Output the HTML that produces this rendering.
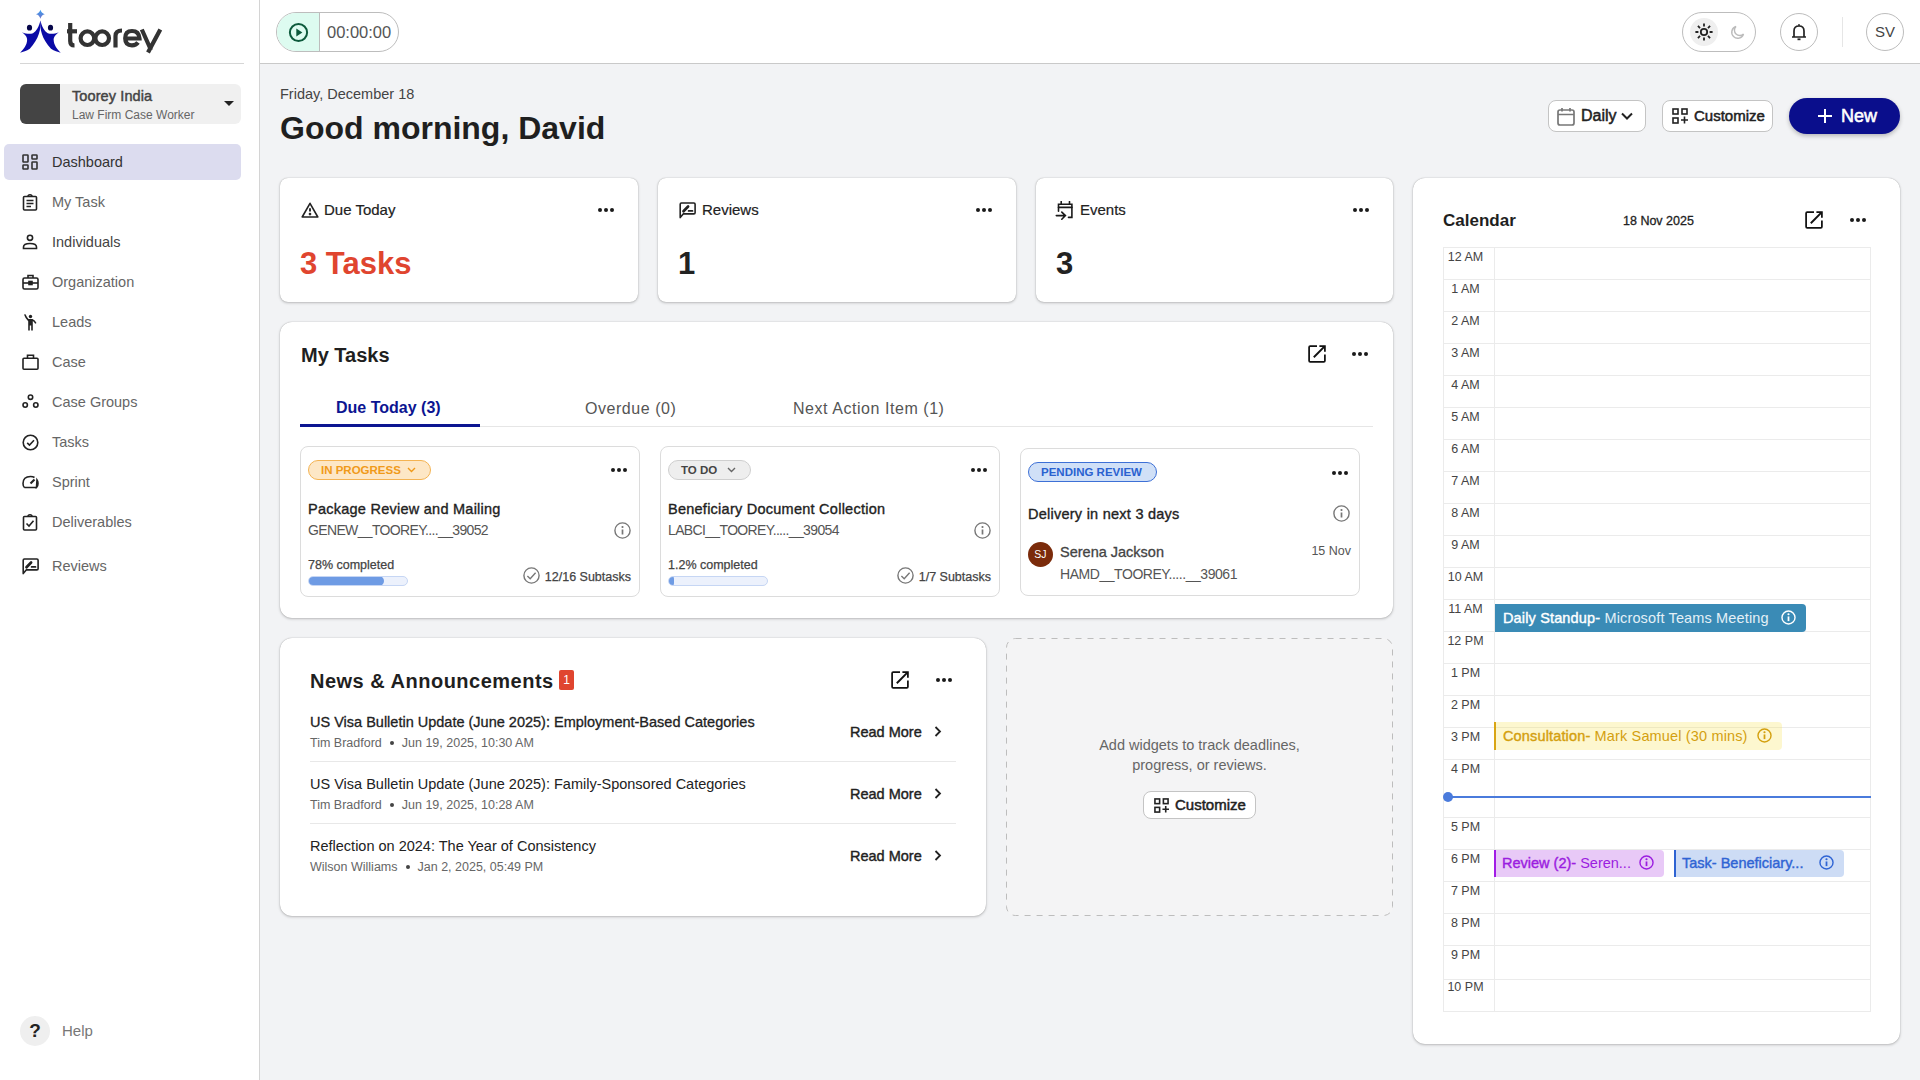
<!DOCTYPE html>
<html><head><meta charset="utf-8">
<style>
*{box-sizing:border-box;margin:0;padding:0}
html,body{width:1920px;height:1080px;overflow:hidden}
body{background:#f2f3f5;font-family:"Liberation Sans",sans-serif;color:#222;position:relative}
.abs{position:absolute}
svg{display:block}
/* sidebar */
#sb{position:absolute;left:0;top:0;width:260px;height:1080px;background:#fff;border-right:1px solid #d4d4d4}
#sb .div{position:absolute;left:20px;top:63px;width:224px;height:1px;background:#d6d6d6}
.org{position:absolute;left:20px;top:84px;width:221px;height:40px;background:#f0f0f0;border-radius:6px;overflow:hidden}
.org .sq{position:absolute;left:0;top:0;width:40px;height:40px;background:#444}
.org .t1{position:absolute;left:52px;top:4px;font-size:14.5px;color:#444;-webkit-text-stroke:0.45px #444;letter-spacing:0.1px}
.org .t2{position:absolute;left:52px;top:24px;font-size:12px;color:#666}
.org .car{position:absolute;left:204px;top:17px;width:0;height:0;border-left:5px solid transparent;border-right:5px solid transparent;border-top:5px solid #222}
.nav{position:absolute;left:4px;width:237px;height:36px;border-radius:5px}
.nav.act{background:#dcdcef}
.nav svg{position:absolute;left:18px;top:10px}
.nav span{position:absolute;left:48px;top:10px;font-size:14.5px;color:#666;line-height:16px}
.nav.act span{color:#333}
/* header */
#hd{position:absolute;left:260px;top:0;width:1660px;height:64px;background:#fff;border-bottom:1px solid #c9c9c9}

.pill{position:absolute;border:1px solid #bdbdbd;border-radius:20px;background:#fff}
.sb{-webkit-text-stroke:0.5px currentColor}
.btn{position:absolute;top:100px;height:32px;border:1px solid #c4c4c4;border-radius:8px;background:#fff}
.btn svg{position:absolute}
.btn span{position:absolute;top:6px;font-size:16px;color:#222;line-height:18px;-webkit-text-stroke:0.5px #222}
.card{position:absolute;background:#fff;border-radius:8px;box-shadow:0 1px 3px rgba(0,0,0,0.22),0 0 1px rgba(0,0,0,0.32)}
.dots{position:absolute;width:17px;height:4px}
.dots i{position:absolute;top:0;width:4.2px;height:4.2px;border-radius:50%;background:#1a1a1a}
.dots i:nth-child(1){left:0}.dots i:nth-child(2){left:6px}.dots i:nth-child(3){left:12px}

.stat .lbl{position:absolute;left:44px;top:23px;font-size:15px;color:#222;line-height:18px;-webkit-text-stroke:0.2px #222}
.stat .val{position:absolute;left:20px;top:68px;font-size:31px;font-weight:bold;line-height:36px;color:#222}
.stat svg{position:absolute;left:21px;top:24px}
.stat .dots{top:30px;right:23px}
.ibtn svg{position:absolute}

.big{border-radius:12px}
.h2{position:absolute;font-size:20px;font-weight:bold;color:#1f1f1f;line-height:24px}
.openic{position:absolute}
.tab{position:absolute;top:398px;font-size:16px;line-height:19px;color:#555;letter-spacing:0.55px}
.tc{position:absolute;background:#fff;border:1px solid #dcdcdc;border-radius:8px}
.badge{position:absolute;left:7px;top:13px;height:20px;border-radius:10px;font-size:11.5px;line-height:18px;font-weight:bold;padding-left:12px;letter-spacing:0px}
.badge svg{position:absolute;top:6px}
.tc .dots{top:21px;right:11px}
.tc .ttl{position:absolute;left:7px;top:53px;font-size:14.5px;line-height:18px;color:#222;-webkit-text-stroke:0.35px #222;letter-spacing:0.25px}
.tc .tid{position:absolute;left:7px;top:74px;font-size:14px;line-height:18px;color:#555;letter-spacing:-0.65px}
.info{position:absolute}
.tc .pct{position:absolute;left:7px;top:111px;font-size:12.5px;line-height:15px;color:#444;-webkit-text-stroke:0.25px #444}
.tc .bar{position:absolute;left:7px;top:129px;width:100px;height:10px;border-radius:5px;background:#ecf1fc;border:1px solid #c6d6f4;overflow:hidden}
.tc .bar i{position:absolute;left:-1px;top:-1px;height:10px;border-radius:5px;background:#6e9be4}
.tc .sub{position:absolute;right:8px;top:122px;font-size:12.5px;line-height:16px;color:#444;-webkit-text-stroke:0.25px #444}
.tc .sub svg{position:absolute;left:-21.5px;top:-2px}

.news .nt{position:absolute;left:30px;font-size:14.5px;line-height:18px;color:#222}
.news .nm{position:absolute;left:30px;font-size:12.5px;line-height:15px;color:#666}
.news .nm b{display:inline-block;width:4px;height:4px;border-radius:50%;background:#444;margin:0 8px 2px 8px;vertical-align:middle}
.news .rm{position:absolute;left:570px;font-size:14.5px;line-height:18px;color:#222;-webkit-text-stroke:0.4px #222}
.news .rm svg{position:absolute;left:84px;top:3px}
.news .dv{position:absolute;left:30px;width:646px;height:1px;background:#e8e8e8}
.cal .tl{position:absolute;left:0;width:51px;text-align:center;font-size:12.5px;line-height:15px;color:#444;padding-right:7px}
.ev{position:absolute;height:28px;font-size:14.5px;line-height:18px;padding:5px 0 0 8px;white-space:nowrap;border-radius:0 4px 4px 0;letter-spacing:0.15px}
.ev b{-webkit-text-stroke:0.4px currentColor;font-weight:normal}
.ev svg{position:absolute;top:6px}
</style></head>
<body>
<div id="sb">
  <svg class="abs" style="left:15px;top:5px" width="150" height="55" viewBox="0 0 150 55">
    <defs><linearGradient id="stg" x1="0" y1="0" x2="0" y2="1"><stop offset="0" stop-color="#3aa0f0"/><stop offset="1" stop-color="#7070c8"/></linearGradient></defs>
    <path d="M25.4 4.8 Q26.3 8.3 29.8 9.2 Q26.3 10.1 25.4 13.8 Q24.5 10.1 21 9.2 Q24.5 8.3 25.4 4.8Z" fill="url(#stg)"/>
    <path d="M25.4 15.6 C26.2 24 24 34 14.8 43.8 C11.5 46 8 47 5.1 47.7 C9 44 12 39.5 12.1 35.2 C12.2 33 11.7 31 7 27.3 C11 29 15 29.3 18 28.3 C21.5 26.5 24.2 21 25.4 15.6 Z" fill="#0a0aa6"/>
    <path d="M 25.4 15.6 C 24.6 24.0 26.8 34.0 36.0 43.8 C 39.3 46.0 42.8 47.0 45.7 47.7 C 41.8 44.0 38.8 39.5 38.7 35.2 C 38.6 33.0 39.1 31.0 43.8 27.3 C 39.8 29.0 35.8 29.3 32.8 28.3 C 29.3 26.5 26.6 21.0 25.4 15.6 Z" fill="#0a0aa6"/>
    <ellipse cx="14.5" cy="22.7" rx="2.6" ry="2.9" fill="#06064a"/>
    <ellipse cx="35.5" cy="22.7" rx="2.6" ry="2.9" fill="#06064a"/>
    <g fill="none" stroke="#333" stroke-width="4.2">
      <path d="M55.2 18 V36 Q55.2 40.5 59.5 40.5"/>
      <path d="M52 26.3 H62"/>
      <circle cx="72.4" cy="33.2" r="6.8"/>
      <circle cx="87.2" cy="33.2" r="6.8"/>
      <path d="M100.5 42.5 V31 Q100.5 25.5 107 25.5"/>
      <path d="M108.5 33.5 H124.5 Q124 26 117 26 Q110.2 26 110.2 33.2 Q110.2 40.3 117 40.3 Q121 40.3 123 37.5"/>
      <path d="M126.8 24.5 L136 45 M145.3 24.5 L133 47.5"/>
    </g>
  </svg>
  <div class="div"></div>
  <div class="org"><div class="sq"></div><div class="t1">Toorey India</div><div class="t2">Law Firm Case Worker</div><div class="car"></div></div>

  <div class="nav act" style="top:144px">
    <svg width="16" height="16" viewBox="0 0 16 16" fill="none" stroke="#333" stroke-width="1.6"><rect x="1" y="1" width="5" height="7" rx="0.6"/><rect x="10" y="1" width="5" height="4" rx="0.6"/><rect x="1" y="11" width="5" height="4" rx="0.6"/><rect x="10" y="8" width="5" height="7" rx="0.6"/></svg>
    <span>Dashboard</span></div>
  <div class="nav" style="top:184px">
    <svg width="16" height="17" viewBox="0 0 16 17" fill="none" stroke="#222" stroke-width="1.6"><rect x="1.5" y="2.5" width="13" height="13.5" rx="1"/><path d="M6 2.5 Q6 0.8 8 0.8 Q10 0.8 10 2.5" /><path d="M4.5 6.5H11.5M4.5 9.5H11.5M4.5 12.5H9" stroke-width="1.4"/></svg>
    <span>My Task</span></div>
  <div class="nav" style="top:224px">
    <svg width="16" height="16" viewBox="0 0 16 16" fill="none" stroke="#222" stroke-width="1.6"><circle cx="8" cy="3.8" r="2.6"/><path d="M1.5 14.5 V13 Q1.5 9.5 8 9.5 Q14.5 9.5 14.5 13 V14.5Z"/></svg>
    <span style="color:#444">Individuals</span></div>
  <div class="nav" style="top:264px">
    <svg width="17" height="16" viewBox="0 0 17 16" fill="none" stroke="#222" stroke-width="1.6"><rect x="1" y="4" width="15" height="11" rx="1.5"/><path d="M6 4V1.5H11V4"/><path d="M1 9H16"/><rect x="7" y="7.5" width="3" height="3" fill="#222"/></svg>
    <span>Organization</span></div>
  <div class="nav" style="top:304px">
    <svg width="16" height="17" viewBox="0 0 16 17" fill="#222"><circle cx="8.5" cy="2.5" r="1.7"/><path d="M2 0.5 L3.5 0.2 Q5 3.5 6.5 5 H10.5 Q13 6 14.5 9 L13.2 9.8 Q12 7.8 10.8 7 V16.5 H9.2 V11.5 H7.8 V16.5 H6.2 V7.2 Q3.5 5 2 0.5Z"/></svg>
    <span>Leads</span></div>
  <div class="nav" style="top:344px">
    <svg width="17" height="16" viewBox="0 0 17 16" fill="none" stroke="#222" stroke-width="1.6"><rect x="1" y="4.2" width="15" height="11" rx="1"/><path d="M5.5 4.2V1.2H11.5V4.2"/></svg>
    <span>Case</span></div>
  <div class="nav" style="top:384px">
    <svg width="17" height="16" viewBox="0 0 17 16" fill="none" stroke="#222" stroke-width="1.6"><circle cx="8.5" cy="3.2" r="2.2"/><circle cx="3.2" cy="11" r="2.2"/><circle cx="13.8" cy="11" r="2.2"/></svg>
    <span>Case Groups</span></div>
  <div class="nav" style="top:424px">
    <svg width="17" height="17" viewBox="0 0 17 17" fill="none" stroke="#222" stroke-width="1.6"><circle cx="8.5" cy="8.5" r="7.3"/><path d="M5.2 8.8 L7.5 11 L12 6.2"/></svg>
    <span>Tasks</span></div>
  <div class="nav" style="top:464px">
    <svg width="17" height="16" viewBox="0 0 17 16" fill="none" stroke="#222" stroke-width="1.6"><path d="M2.5 13.5 Q1 12.5 1 9.5 Q1 2.5 8.5 2.5 Q11 2.5 12.5 3.5 M15 6 Q16 7.5 16 9.5 Q16 12.5 14.5 13.5 Z M2.5 13.5 H14.5"/><path d="M8.5 9.5 L12.5 5.5" stroke-width="2.2"/></svg>
    <span>Sprint</span></div>
  <div class="nav" style="top:504px">
    <svg width="16" height="17" viewBox="0 0 16 17" fill="none" stroke="#222" stroke-width="1.6"><rect x="1.5" y="2.5" width="13" height="13.5" rx="1"/><path d="M6 2.5 Q6 0.8 8 0.8 Q10 0.8 10 2.5"/><path d="M4.5 9.5 L7 12 L11.5 6.8"/></svg>
    <span>Deliverables</span></div>
  <div class="nav" style="top:548px">
    <svg width="17" height="17" viewBox="0 0 17 17" fill="none" stroke="#222" stroke-width="1.6"><path d="M1.2 15.6 V2.2 Q1.2 1 2.4 1 H14.9 Q16.1 1 16.1 2.2 V10.7 Q16.1 11.9 14.9 11.9 H4.2 Z" stroke-linejoin="round"/><path d="M4.5 9.3 L9.1 4.5" stroke-width="2.7" stroke-linecap="round"/><path d="M9.6 8.9 H13.5" stroke-width="1.7" stroke-linecap="round"/></svg>
    <span>Reviews</span></div>

  <div class="abs" style="left:20px;top:1016px;width:30px;height:30px;border-radius:50%;background:#efefef;text-align:center;font-weight:bold;font-size:19px;line-height:30px;color:#222">?</div>
  <div class="abs" style="left:62px;top:1022px;font-size:15px;color:#777">Help</div>
</div>

<div id="hd">
  <div class="pill" style="left:16px;top:12px;width:123px;height:40px;overflow:hidden">
    <div class="abs" style="left:0;top:0;width:43px;height:38px;background:#ddfbf0;border-right:1px solid #bdbdbd"></div>
    <svg class="abs" style="left:11px;top:9px" width="21" height="21" viewBox="0 0 21 21"><circle cx="10.5" cy="10.5" r="8.6" fill="none" stroke="#0d5a3c" stroke-width="2"/><path d="M8.3 6.6 L14.4 10.5 L8.3 14.4Z" fill="#0d5a3c"/></svg>
    <div class="abs" style="left:50px;top:10px;font-size:16.5px;color:#555;line-height:19px">00:00:00</div>
  </div>
  <div class="pill" style="left:1422px;top:12px;width:74px;height:40px"></div>
  <div class="abs" style="left:1430px;top:18px;width:28px;height:28px;border-radius:50%;background:#efefef"></div>
  <svg class="abs" style="left:1434px;top:22px" width="20" height="20" viewBox="0 0 20 20" stroke="#222" stroke-width="1.8" fill="none"><circle cx="10" cy="10" r="3.2"/><path d="M15.60 10.00L18.60 10.00M13.96 13.96L16.08 16.08M10.00 15.60L10.00 18.60M6.04 13.96L3.92 16.08M4.40 10.00L1.40 10.00M6.04 6.04L3.92 3.92M10.00 4.40L10.00 1.40M13.96 6.04L16.08 3.92"/></svg>
  <svg class="abs" style="left:1470px;top:25px" width="15" height="15" viewBox="0 0 15 15"><path d="M6 1.5 A6 6 0 1 0 13.5 9 A5 5 0 0 1 6 1.5Z" fill="none" stroke="#bbb" stroke-width="1.4"/></svg>
  <div class="abs" style="left:1520px;top:13px;width:38px;height:38px;border-radius:50%;border:1px solid #bdbdbd"></div>
  <svg class="abs" style="left:1531px;top:23px" width="16" height="18" viewBox="0 0 16 18" fill="none" stroke="#222" stroke-width="1.7"><path d="M1 14 H15 M3 14 V8 Q3 3 8 3 Q13 3 13 8 V14"/><path d="M6.5 16.3 H9.5" stroke-width="1.8"/><circle cx="8" cy="2" r="0.9" fill="#222" stroke="none"/></svg>
  <div class="abs" style="left:1582px;top:17px;width:1px;height:30px;background:#e6e6e6"></div>
  <div class="abs" style="left:1606px;top:13px;width:38px;height:38px;border-radius:50%;border:1px solid #bdbdbd;text-align:center;line-height:36px;font-size:15px;color:#444">SV</div>
</div>
<div class="abs" style="left:280px;top:85px;font-size:14.5px;color:#444;line-height:18px">Friday, December 18</div>
<div class="abs" style="left:280px;top:109px;font-size:32px;font-weight:bold;color:#1f1f1f;line-height:38px;letter-spacing:0px">Good morning, David</div>

<div class="btn" style="left:1548px;width:98px">
  <svg style="left:8px;top:6px" width="18" height="19" viewBox="0 0 18 19" fill="none" stroke="#777" stroke-width="1.7"><rect x="1" y="3" width="16" height="15" rx="2"/><path d="M1 7.5H17M5 1V4.5M13 1V4.5"/></svg>
  <span style="left:32px">Daily</span>
  <svg style="left:72px;top:11px" width="12" height="9" viewBox="0 0 12 9" fill="none" stroke="#222" stroke-width="2"><path d="M1 1.5 L6 6.5 L11 1.5"/></svg>
</div>
<div class="btn" style="left:1662px;width:111px">
  <svg style="left:9px;top:7px" width="16" height="16" viewBox="0 0 16 16" fill="none" stroke="#222" stroke-width="1.6"><rect x="1" y="1" width="5" height="5"/><rect x="10" y="1" width="5" height="5"/><rect x="1" y="10" width="5" height="5"/><path d="M12.5 8.5V15.5M9 12H16"/></svg>
  <span style="left:31px;font-size:15px">Customize</span>
</div>
<div class="abs" style="left:1789px;top:98px;width:111px;height:36px;border-radius:18px;background:#0a0e8c;box-shadow:0 2px 4px rgba(0,0,0,0.25)">
  <svg class="abs" style="left:28px;top:10px" width="16" height="16" viewBox="0 0 16 16" stroke="#fff" stroke-width="2"><path d="M8 1V15M1 8H15"/></svg>
  <div class="abs" style="left:52px;top:8px;font-size:18px;color:#fff;line-height:21px;-webkit-text-stroke:0.55px #fff">New</div>
</div>


<div class="card stat" style="left:280px;top:178px;width:358px;height:124px">
  <svg width="18" height="17" viewBox="0 0 18 17" fill="none" stroke="#222" stroke-width="1.6" stroke-linejoin="round"><path d="M9 1.3 L16.8 15 H1.2 Z"/><path d="M9 6.3V9.6" stroke-width="1.9"/><circle cx="9" cy="12.1" r="0.55" fill="#222"/></svg>
  <div class="lbl">Due Today</div>
  <div class="val" style="color:#e0452f">3 Tasks</div>
  <div class="dots"><i></i><i></i><i></i></div>
</div>
<div class="card stat" style="left:658px;top:178px;width:358px;height:124px">
  <svg width="17" height="17" viewBox="0 0 17 17" fill="none" stroke="#222" stroke-width="1.6"><path d="M1.2 15.6 V2.2 Q1.2 1 2.4 1 H14.9 Q16.1 1 16.1 2.2 V10.7 Q16.1 11.9 14.9 11.9 H4.2 Z" stroke-linejoin="round"/><path d="M4.5 9.3 L9.1 4.5" stroke-width="2.7" stroke-linecap="round"/><path d="M9.6 8.9 H13.5" stroke-width="1.7" stroke-linecap="round"/></svg>
  <div class="lbl">Reviews</div>
  <div class="val">1</div>
  <div class="dots"><i></i><i></i><i></i></div>
</div>
<div class="card stat" style="left:1036px;top:178px;width:357px;height:124px">
  <svg style="left:19px;top:23px" width="19" height="20" viewBox="0 0 19 20" fill="none" stroke="#1a1a1a" stroke-width="1.6" stroke-linecap="round"><path d="M3.5 10.2 V3.2 H16.9 V16.4 H13.5"/><path d="M3.5 6.4H16.9M6.2 0.6V3.2M14.5 0.6V3.2"/><path d="M1.3 14.6 H10.4 M6.8 11.1 L10.4 14.6 L6.8 18.2"/></svg>
  <div class="lbl">Events</div>
  <div class="val">3</div>
  <div class="dots"><i></i><i></i><i></i></div>
</div>

<div class="card big" style="left:280px;top:322px;width:1113px;height:296px">
  <div class="h2" style="left:21px;top:21px">My Tasks</div>
  <div class="openic" style="left:1028px;top:23px"><svg width="18" height="18" viewBox="0 0 18 18" fill="none" stroke="#111" stroke-width="1.75"><path d="M9 1.1 H2.2 Q1.1 1.1 1.1 2.2 V15.8 Q1.1 16.9 2.2 16.9 H15.8 Q16.9 16.9 16.9 15.8 V9.4"/><path d="M11.4 1.1 H16.9 V6.7"/><path d="M16.6 1.4 L5.8 12.2" stroke-width="1.95"/></svg></div>
  <div class="dots" style="left:1072px;top:30px"><i></i><i></i><i></i></div>
  <div class="abs" style="left:20px;top:104px;width:1073px;height:1px;background:#e6e6e6"></div>
  <div class="abs" style="left:20px;top:102px;width:180px;height:3px;background:#0c1591"></div>
</div>
<div class="tab" style="left:336px;color:#0c1591;font-weight:bold;letter-spacing:0">Due Today (3)</div>
<div class="tab" style="left:585px;top:399px">Overdue (0)</div>
<div class="tab" style="left:793px;top:399px">Next Action Item (1)</div>

<div class="tc" style="left:300px;top:446px;width:340px;height:151px">
  <div class="badge" style="width:123px;background:#fde7c6;border:1px solid #f4b352;color:#f09a19">IN PROGRESS<svg style="left:98px" width="9" height="6" viewBox="0 0 9 6" fill="none" stroke="#f09a19" stroke-width="1.4"><path d="M1 1 L4.5 4.5 L8 1"/></svg></div>
  <div class="dots"><i></i><i></i><i></i></div>
  <div class="ttl">Package Review and Mailing</div>
  <div class="tid">GENEW__TOOREY....__39052</div>
  <div class="info" style="left:313px;top:75px"><svg width="17" height="17" viewBox="0 0 17 17" fill="none" stroke="#777" stroke-width="1.4"><circle cx="8.5" cy="8.5" r="7.6"/><path d="M8.5 7.5V12.5" stroke-width="1.7"/><circle cx="8.5" cy="5" r="0.5" fill="#777" stroke-width="1.2"/></svg></div>
  <div class="pct">78% completed</div>
  <div class="bar"><i style="width:76px"></i></div>
  <div class="sub"><svg width="17" height="17" viewBox="0 0 17 17" fill="none" stroke="#777" stroke-width="1.4"><circle cx="8.5" cy="8.5" r="7.6"/><path d="M4.4 9 L7.2 11.7 L12.6 5.8" stroke="#777"/></svg>12/16 Subtasks</div>
</div>
<div class="tc" style="left:660px;top:446px;width:340px;height:151px">
  <div class="badge" style="width:83px;background:#eeeeee;border:1px solid #cfcfcf;color:#444">TO DO<svg style="left:58px" width="9" height="6" viewBox="0 0 9 6" fill="none" stroke="#666" stroke-width="1.4"><path d="M1 1 L4.5 4.5 L8 1"/></svg></div>
  <div class="dots"><i></i><i></i><i></i></div>
  <div class="ttl">Beneficiary Document Collection</div>
  <div class="tid">LABCI__TOOREY.....__39054</div>
  <div class="info" style="left:313px;top:75px"><svg width="17" height="17" viewBox="0 0 17 17" fill="none" stroke="#777" stroke-width="1.4"><circle cx="8.5" cy="8.5" r="7.6"/><path d="M8.5 7.5V12.5" stroke-width="1.7"/><circle cx="8.5" cy="5" r="0.5" fill="#777" stroke-width="1.2"/></svg></div>
  <div class="pct">1.2% completed</div>
  <div class="bar"><i style="width:6px"></i></div>
  <div class="sub"><svg width="17" height="17" viewBox="0 0 17 17" fill="none" stroke="#777" stroke-width="1.4"><circle cx="8.5" cy="8.5" r="7.6"/><path d="M4.4 9 L7.2 11.7 L12.6 5.8" stroke="#777"/></svg>1/7 Subtasks</div>
</div>
<div class="tc" style="left:1020px;top:448px;width:340px;height:148px">
  <div class="badge" style="left:7px;top:13px;width:129px;background:#d0e0f7;border:1px solid #3d70d6;color:#2a62d0;padding-left:12px">PENDING REVIEW</div>
  <div class="dots" style="top:22px;right:10px"><i></i><i></i><i></i></div>
  <div class="abs" style="left:7px;top:56px;font-size:14.5px;line-height:18px;color:#222;-webkit-text-stroke:0.35px #222;letter-spacing:0.25px">Delivery in next 3 days</div>
  <div class="info" style="left:312px;top:56px"><svg width="17" height="17" viewBox="0 0 17 17" fill="none" stroke="#777" stroke-width="1.4"><circle cx="8.5" cy="8.5" r="7.6"/><path d="M8.5 7.5V12.5" stroke-width="1.7"/><circle cx="8.5" cy="5" r="0.5" fill="#777" stroke-width="1.2"/></svg></div>
  <div class="abs" style="left:7px;top:93px;width:25px;height:25px;border-radius:50%;background:#7b2b0b;color:#fff;font-size:10.5px;line-height:25px;text-align:center">SJ</div>
  <div class="abs" style="left:39px;top:94px;font-size:14.5px;line-height:18px;color:#444;-webkit-text-stroke:0.3px #444">Serena Jackson</div>
  <div class="abs" style="right:8px;top:95px;font-size:12.5px;line-height:15px;color:#555">15 Nov</div>
  <div class="abs" style="left:39px;top:116px;font-size:14.5px;line-height:18px;color:#555;letter-spacing:-0.45px;font-size:14px">HAMD__TOOREY.....__39061</div>
</div>

<div class="card big news" style="left:280px;top:638px;width:706px;height:278px">
  <div class="h2" style="left:30px;top:31px;letter-spacing:0.5px">News &amp; Announcements</div>
  <div class="abs" style="left:279px;top:32px;width:15px;height:20px;background:#e0452f;border-radius:2px;color:#fff;font-size:12px;line-height:20px;text-align:center">1</div>
  <div class="openic" style="left:611px;top:33px"><svg width="18" height="18" viewBox="0 0 18 18" fill="none" stroke="#111" stroke-width="1.75"><path d="M9 1.1 H2.2 Q1.1 1.1 1.1 2.2 V15.8 Q1.1 16.9 2.2 16.9 H15.8 Q16.9 16.9 16.9 15.8 V9.4"/><path d="M11.4 1.1 H16.9 V6.7"/><path d="M16.6 1.4 L5.8 12.2" stroke-width="1.95"/></svg></div>
  <div class="dots" style="left:656px;top:40px"><i></i><i></i><i></i></div>
  <div class="nt" style="top:75px;-webkit-text-stroke:0.3px #222">US Visa Bulletin Update (June 2025): Employment-Based Categories</div>
  <div class="nm" style="top:98px">Tim Bradford<b></b>Jun 19, 2025, 10:30 AM</div>
  <div class="rm" style="top:85px">Read More<svg width="8" height="11" viewBox="0 0 8 11" fill="none" stroke="#222" stroke-width="1.8"><path d="M1.5 1 L6 5.5 L1.5 10"/></svg></div>
  <div class="dv" style="top:123px"></div>
  <div class="nt" style="top:137px">US Visa Bulletin Update (June 2025): Family-Sponsored Categories</div>
  <div class="nm" style="top:160px">Tim Bradford<b></b>Jun 19, 2025, 10:28 AM</div>
  <div class="rm" style="top:147px">Read More<svg width="8" height="11" viewBox="0 0 8 11" fill="none" stroke="#222" stroke-width="1.8"><path d="M1.5 1 L6 5.5 L1.5 10"/></svg></div>
  <div class="dv" style="top:185px"></div>
  <div class="nt" style="top:199px">Reflection on 2024: The Year of Consistency</div>
  <div class="nm" style="top:222px">Wilson Williams<b></b>Jan 2, 2025, 05:49 PM</div>
  <div class="rm" style="top:209px">Read More<svg width="8" height="11" viewBox="0 0 8 11" fill="none" stroke="#222" stroke-width="1.8"><path d="M1.5 1 L6 5.5 L1.5 10"/></svg></div>
</div>
<div class="abs" style="left:1006px;top:638px;width:387px;height:278px;background:#f4f4f5;border-radius:9px"></div>
<svg class="abs" style="left:1006px;top:638px" width="387" height="278"><rect x="0.5" y="0.5" width="386" height="277" rx="9" fill="none" stroke="#bdbdbd" stroke-dasharray="6 6"/></svg>
<div class="abs" style="left:1006px;top:735px;width:387px;text-align:center;font-size:14.5px;line-height:20px;color:#666">Add widgets to track deadlines,<br>progress, or reviews.</div>
<div class="abs" style="left:1143px;top:791px;width:113px;height:28px;border:1px solid #c4c4c4;border-radius:8px;background:#fff">
  <svg class="abs" style="left:10px;top:6px" width="15" height="15" viewBox="0 0 16 16" fill="none" stroke="#222" stroke-width="1.7"><rect x="1" y="1" width="5" height="5"/><rect x="10" y="1" width="5" height="5"/><rect x="1" y="10" width="5" height="5"/><path d="M12.5 8.5V15.5M9 12H16"/></svg>
  <div class="abs" style="left:31px;top:4px;font-size:15px;line-height:18px;color:#222;-webkit-text-stroke:0.5px #222">Customize</div>
</div>
<div class="card big cal" style="left:1413px;top:178px;width:487px;height:866px"></div>
<div class="abs" style="left:1443px;top:211px;font-size:17px;font-weight:bold;line-height:20px;color:#1f1f1f">Calendar</div>
<div class="abs" style="left:1623px;top:213px;font-size:12.5px;line-height:16px;color:#222;-webkit-text-stroke:0.3px #222">18 Nov 2025</div>
<div class="openic" style="left:1805px;top:211px"><svg width="18" height="18" viewBox="0 0 18 18" fill="none" stroke="#111" stroke-width="1.75"><path d="M9 1.1 H2.2 Q1.1 1.1 1.1 2.2 V15.8 Q1.1 16.9 2.2 16.9 H15.8 Q16.9 16.9 16.9 15.8 V9.4"/><path d="M11.4 1.1 H16.9 V6.7"/><path d="M16.6 1.4 L5.8 12.2" stroke-width="1.95"/></svg></div>
<div class="dots" style="left:1850px;top:218px"><i></i><i></i><i></i></div>
<div class="abs" style="left:1443px;top:247px;width:428px;height:765px;background:#fff"></div>
<div class="abs" style="left:1443px;top:247px;width:428px;height:1px;background:#ebebeb"></div>
<div class="abs" style="left:1443px;top:279px;width:428px;height:1px;background:#ebebeb"></div>
<div class="abs" style="left:1443px;top:311px;width:428px;height:1px;background:#ebebeb"></div>
<div class="abs" style="left:1443px;top:343px;width:428px;height:1px;background:#ebebeb"></div>
<div class="abs" style="left:1443px;top:375px;width:428px;height:1px;background:#ebebeb"></div>
<div class="abs" style="left:1443px;top:407px;width:428px;height:1px;background:#ebebeb"></div>
<div class="abs" style="left:1443px;top:439px;width:428px;height:1px;background:#ebebeb"></div>
<div class="abs" style="left:1443px;top:471px;width:428px;height:1px;background:#ebebeb"></div>
<div class="abs" style="left:1443px;top:503px;width:428px;height:1px;background:#ebebeb"></div>
<div class="abs" style="left:1443px;top:535px;width:428px;height:1px;background:#ebebeb"></div>
<div class="abs" style="left:1443px;top:567px;width:428px;height:1px;background:#ebebeb"></div>
<div class="abs" style="left:1443px;top:599px;width:428px;height:1px;background:#ebebeb"></div>
<div class="abs" style="left:1443px;top:631px;width:428px;height:1px;background:#ebebeb"></div>
<div class="abs" style="left:1443px;top:663px;width:428px;height:1px;background:#ebebeb"></div>
<div class="abs" style="left:1443px;top:695px;width:428px;height:1px;background:#ebebeb"></div>
<div class="abs" style="left:1443px;top:727px;width:428px;height:1px;background:#ebebeb"></div>
<div class="abs" style="left:1443px;top:759px;width:428px;height:1px;background:#ebebeb"></div>
<div class="abs" style="left:1443px;top:817px;width:428px;height:1px;background:#ebebeb"></div>
<div class="abs" style="left:1443px;top:849px;width:428px;height:1px;background:#ebebeb"></div>
<div class="abs" style="left:1443px;top:881px;width:428px;height:1px;background:#ebebeb"></div>
<div class="abs" style="left:1443px;top:913px;width:428px;height:1px;background:#ebebeb"></div>
<div class="abs" style="left:1443px;top:945px;width:428px;height:1px;background:#ebebeb"></div>
<div class="abs" style="left:1443px;top:979px;width:428px;height:1px;background:#ebebeb"></div>
<div class="abs" style="left:1443px;top:1011px;width:428px;height:1px;background:#ebebeb"></div>
<div class="abs" style="left:1443px;top:247px;width:1px;height:765px;background:#ebebeb"></div>
<div class="abs" style="left:1870px;top:247px;width:1px;height:765px;background:#ebebeb"></div>
<div class="abs" style="left:1494px;top:247px;width:1px;height:765px;background:#ebebeb"></div>
<div class="abs" style="left:1440px;top:250px;width:51px;text-align:center;font-size:12.5px;line-height:15px;color:#444">12 AM</div>
<div class="abs" style="left:1440px;top:282px;width:51px;text-align:center;font-size:12.5px;line-height:15px;color:#444">1 AM</div>
<div class="abs" style="left:1440px;top:314px;width:51px;text-align:center;font-size:12.5px;line-height:15px;color:#444">2 AM</div>
<div class="abs" style="left:1440px;top:346px;width:51px;text-align:center;font-size:12.5px;line-height:15px;color:#444">3 AM</div>
<div class="abs" style="left:1440px;top:378px;width:51px;text-align:center;font-size:12.5px;line-height:15px;color:#444">4 AM</div>
<div class="abs" style="left:1440px;top:410px;width:51px;text-align:center;font-size:12.5px;line-height:15px;color:#444">5 AM</div>
<div class="abs" style="left:1440px;top:442px;width:51px;text-align:center;font-size:12.5px;line-height:15px;color:#444">6 AM</div>
<div class="abs" style="left:1440px;top:474px;width:51px;text-align:center;font-size:12.5px;line-height:15px;color:#444">7 AM</div>
<div class="abs" style="left:1440px;top:506px;width:51px;text-align:center;font-size:12.5px;line-height:15px;color:#444">8 AM</div>
<div class="abs" style="left:1440px;top:538px;width:51px;text-align:center;font-size:12.5px;line-height:15px;color:#444">9 AM</div>
<div class="abs" style="left:1440px;top:570px;width:51px;text-align:center;font-size:12.5px;line-height:15px;color:#444">10 AM</div>
<div class="abs" style="left:1440px;top:602px;width:51px;text-align:center;font-size:12.5px;line-height:15px;color:#444">11 AM</div>
<div class="abs" style="left:1440px;top:634px;width:51px;text-align:center;font-size:12.5px;line-height:15px;color:#444">12 PM</div>
<div class="abs" style="left:1440px;top:666px;width:51px;text-align:center;font-size:12.5px;line-height:15px;color:#444">1 PM</div>
<div class="abs" style="left:1440px;top:698px;width:51px;text-align:center;font-size:12.5px;line-height:15px;color:#444">2 PM</div>
<div class="abs" style="left:1440px;top:730px;width:51px;text-align:center;font-size:12.5px;line-height:15px;color:#444">3 PM</div>
<div class="abs" style="left:1440px;top:762px;width:51px;text-align:center;font-size:12.5px;line-height:15px;color:#444">4 PM</div>
<div class="abs" style="left:1440px;top:820px;width:51px;text-align:center;font-size:12.5px;line-height:15px;color:#444">5 PM</div>
<div class="abs" style="left:1440px;top:852px;width:51px;text-align:center;font-size:12.5px;line-height:15px;color:#444">6 PM</div>
<div class="abs" style="left:1440px;top:884px;width:51px;text-align:center;font-size:12.5px;line-height:15px;color:#444">7 PM</div>
<div class="abs" style="left:1440px;top:916px;width:51px;text-align:center;font-size:12.5px;line-height:15px;color:#444">8 PM</div>
<div class="abs" style="left:1440px;top:948px;width:51px;text-align:center;font-size:12.5px;line-height:15px;color:#444">9 PM</div>
<div class="abs" style="left:1440px;top:980px;width:51px;text-align:center;font-size:12.5px;line-height:15px;color:#444">10 PM</div>
<div class="abs" style="left:1448px;top:796px;width:423px;height:2px;background:#4a7bdc"></div>
<div class="abs" style="left:1443px;top:792px;width:10px;height:10px;border-radius:50%;background:#4a7bdc"></div>
<div class="ev" style="left:1495px;top:604px;width:311px;background:#3a8bb6;color:#fff"><b>Daily Standup-</b> <span style="color:#e3f0f7">Microsoft Teams Meeting</span><svg style="left:285px" width="15" height="15"></svg></div>
<div class="abs" style="left:1781px;top:610px"><svg width="15" height="15" viewBox="0 0 17 17" fill="none" stroke="#fff" stroke-width="1.6"><circle cx="8.5" cy="8.5" r="7.4"/><path d="M8.5 7.3V12.6" stroke-width="2"/><circle cx="8.5" cy="4.8" r="0.6" fill="#fff" stroke-width="1.3"/></svg></div>
<div class="ev" style="left:1494px;top:722px;width:288px;background:rgba(246,226,70,0.26);border-left:2px solid #d9a514;color:#d4a00f;padding-left:7px"><b>Consultation-</b> Mark Samuel (30 mins)</div>
<div class="abs" style="left:1757px;top:728px"><svg width="15" height="15" viewBox="0 0 17 17" fill="none" stroke="#d4a00f" stroke-width="1.6"><circle cx="8.5" cy="8.5" r="7.4"/><path d="M8.5 7.3V12.6" stroke-width="2"/><circle cx="8.5" cy="4.8" r="0.6" fill="#d4a00f" stroke-width="1.3"/></svg></div>
<div class="ev" style="left:1494px;top:850px;width:170px;height:27px;padding-top:4px;letter-spacing:0;background:#e8c9f7;border-left:2px solid #a21ce6;color:#9b1de0;padding-left:6px"><b>Review (2)-</b> Seren...</div>
<div class="abs" style="left:1639px;top:855px"><svg width="15" height="15" viewBox="0 0 17 17" fill="none" stroke="#9b1de0" stroke-width="1.6"><circle cx="8.5" cy="8.5" r="7.4"/><path d="M8.5 7.3V12.6" stroke-width="2"/><circle cx="8.5" cy="4.8" r="0.6" fill="#9b1de0" stroke-width="1.3"/></svg></div>
<div class="ev" style="left:1674px;top:850px;width:170px;height:27px;padding-top:4px;letter-spacing:0;background:#cddcf5;border-left:2px solid #2e63d2;color:#2f64d4;padding-left:6px"><b>Task- Beneficiary...</b></div>
<div class="abs" style="left:1819px;top:855px"><svg width="15" height="15" viewBox="0 0 17 17" fill="none" stroke="#2f64d4" stroke-width="1.6"><circle cx="8.5" cy="8.5" r="7.4"/><path d="M8.5 7.3V12.6" stroke-width="2"/><circle cx="8.5" cy="4.8" r="0.6" fill="#2f64d4" stroke-width="1.3"/></svg></div>
</body></html>
